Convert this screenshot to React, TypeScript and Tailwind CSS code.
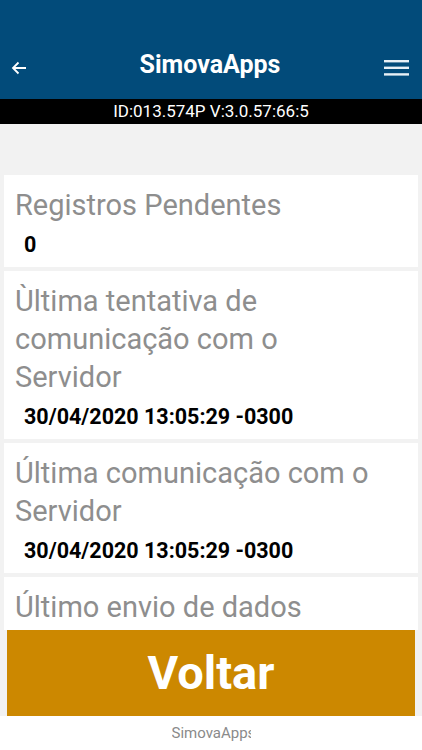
import React from 'react';

interface InfoItem {
  label: string;
  value?: string;
}

const items: InfoItem[] = [
  { label: 'Registros Pendentes', value: '0' },
  { label: 'Ùltima tentativa de comunicação com o Servidor', value: '30/04/2020 13:05:29 -0300' },
  { label: 'Última comunicação com o Servidor', value: '30/04/2020 13:05:29 -0300' },
  { label: 'Último envio de dados', value: '30/04/2020 13:05:29 -0300' },
];

function InfoCard({ label, value }: InfoItem) {
  return (
    <div className="bg-white pt-[11px] pb-[9px] pl-[11px] pr-[40px] shrink-0">
      <div className="text-[29px] leading-[38px] text-[#8e8e8e]">{label}</div>
      {value && (
        <div className="mt-[8px] pl-[9px] text-[21.5px] leading-[26px] font-bold text-black whitespace-nowrap">
          {value}
        </div>
      )}
    </div>
  );
}

export default function App() {
  return (
    <div className="w-[422px] h-[750px] flex flex-col bg-[#f2f2f2] overflow-hidden font-['Roboto',sans-serif]">
      {/* Top bar */}
      <header className="bg-[#024b7a] pt-[30px] h-[99px] shrink-0">
        <div className="h-[69px] grid grid-cols-[1fr_auto_1fr] items-center pl-[11px] pr-[13px]">
          <svg width="16" height="16" viewBox="0 0 16 16" className="mt-[6px]">
            <path d="M15 8H2M7.5 2.5L2 8l5.5 5.5" fill="none" stroke="white" strokeWidth="1.8" />
          </svg>
          <h1 className="text-white text-[25px] font-bold">SimovaApps</h1>
          <div className="flex justify-end mt-[6px]">
            <svg width="25" height="16" viewBox="0 0 25 16">
              <rect x="0" y="0" width="25" height="2.4" fill="#e8f0f6" />
              <rect x="0" y="6.6" width="25" height="2.4" fill="#e8f0f6" />
              <rect x="0" y="13.2" width="25" height="2.4" fill="#e8f0f6" />
            </svg>
          </div>
        </div>
      </header>

      <div className="h-[25px] shrink-0 bg-black text-white text-[17px] flex items-center justify-center">
        ID:013.574P V:3.0.57:66:5
      </div>

      <main className="flex-1 overflow-hidden pt-[51px] px-[4px] flex flex-col gap-[4px]">
        {items.map((item) => (
          <InfoCard key={item.label} {...item} />
        ))}
      </main>

      <div className="h-[86px] shrink-0 px-[7px]">
        <button className="w-full h-full bg-[#cc8800] text-white text-[47px] font-bold">
          Voltar
        </button>
      </div>

      {/* footer label is clipped in the original too */}
      <footer className="h-[34px] shrink-0 bg-white flex items-center justify-center">
        <span className="w-[79px] overflow-hidden whitespace-nowrap text-[15px] text-[#8a8a8a]">
          SimovaApps
        </span>
      </footer>
    </div>
  );
}
